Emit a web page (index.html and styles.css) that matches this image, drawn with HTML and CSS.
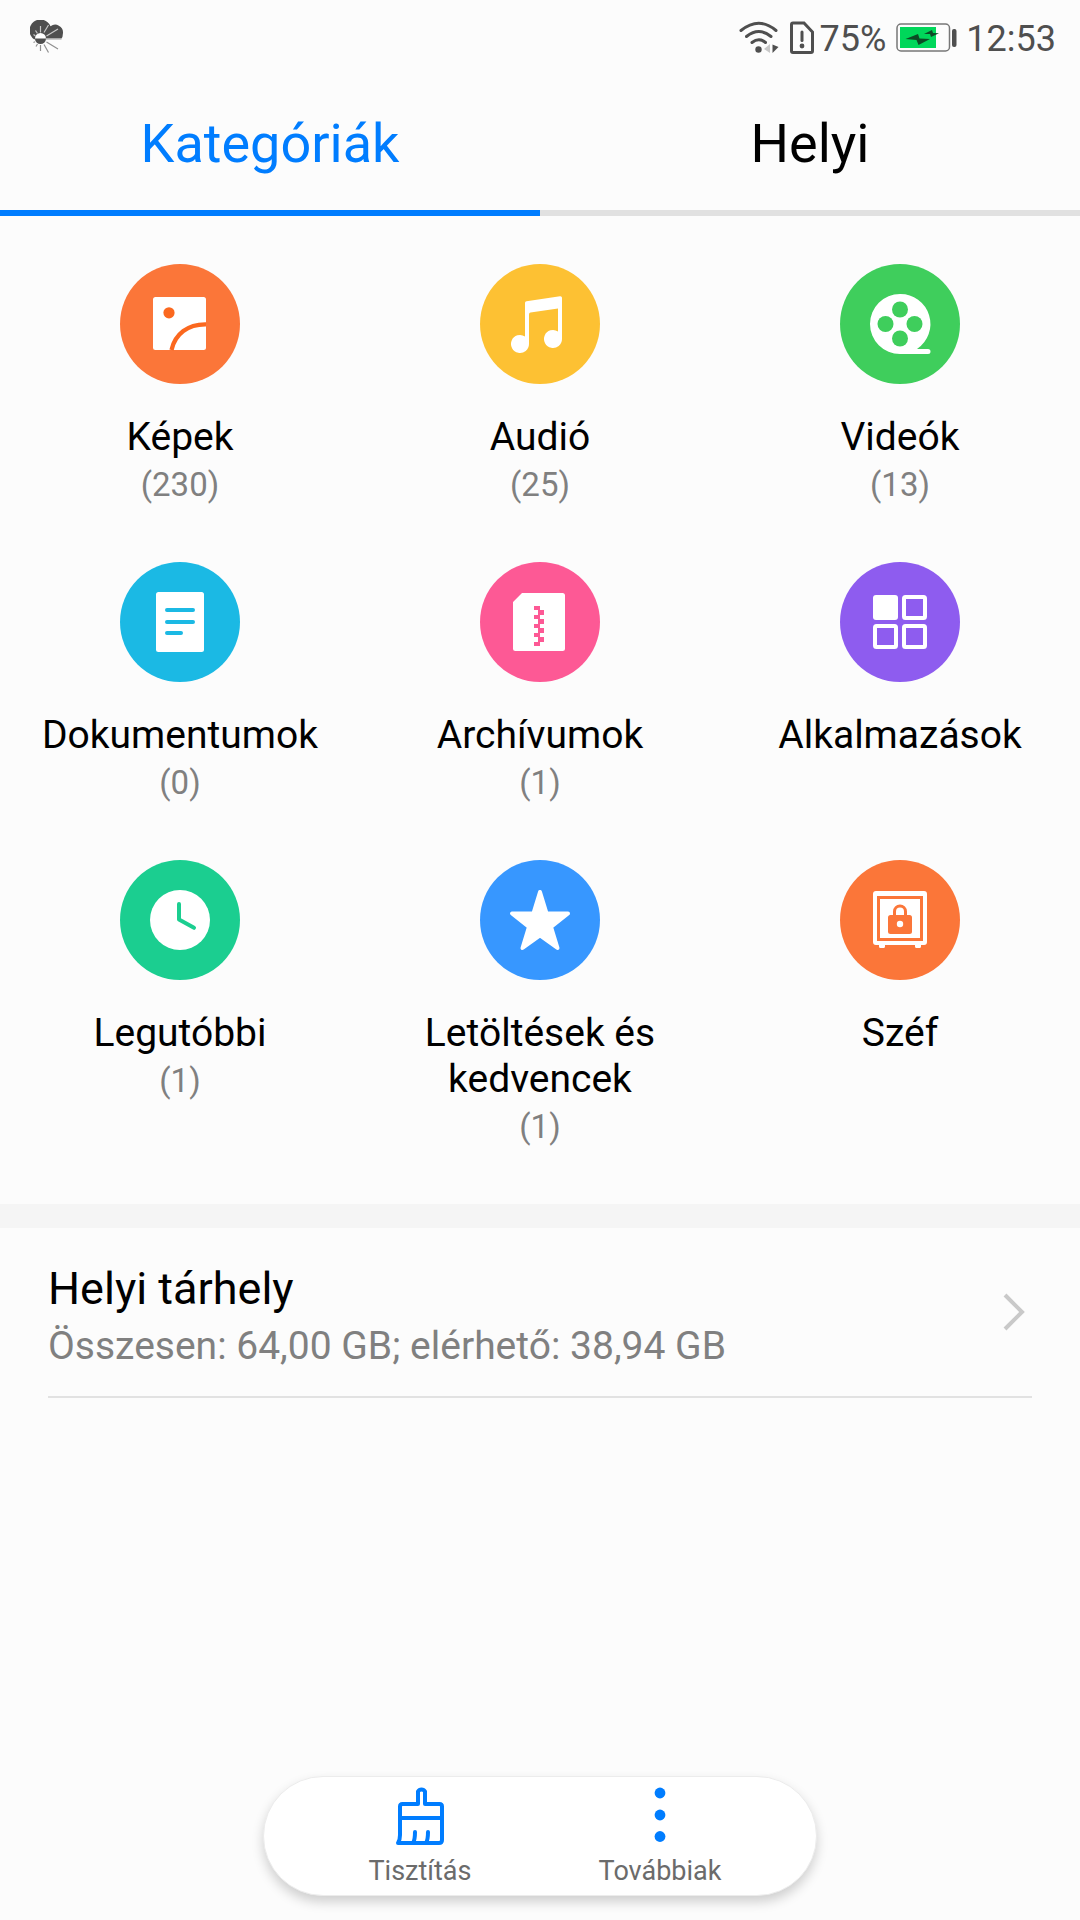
FILE: index.html
```html
<!DOCTYPE html>
<html lang="hu">
<head>
<meta charset="utf-8">
<meta name="viewport" content="width=device-width, initial-scale=1">
<title>Fájlok</title>
<link rel="stylesheet" href="styles.css">
</head>
<body>
<div class="screen">
  <header class="status">
    <svg class="status-weather" width="36" height="36" viewBox="0 0 36 36" aria-hidden="true">
      <path d="M4 19.200A10.900 10.900 0 1 1 20.500 6.300A7.800 7.800 0 0 1 33 13Q33 17 31 19.200Z" fill="#4f4f4f"/>
      <g stroke="#c8c8c8" stroke-width="1.200"><path d="M10.500 6v6.500M14 12.500l4.500-7.500M16.500 16 28 9M5.500 10.500 7.500 13.500M3.500 14.500l2 1.500M16 18.800h16"/></g>
      <g stroke="#909090" stroke-width="1.200"><path d="M10.500 25v6M14 24.500l4.500 8M16.500 22 28 29M7.500 24l-1.500 2.500M3.500 22.500l1.500-.7"/></g>
      <circle cx="10.500" cy="18.500" r="5.500" fill="#4f4f4f"/>
      <path d="M5 18.500a5.500 5.500 0 0 1 11 0z" fill="#fff"/>
    </svg>
    <div class="status-right">
      <svg width="40" height="34" viewBox="0 0 40 34" aria-hidden="true">
        <g fill="none" stroke="#4f4f4f" stroke-width="3" stroke-linecap="round"><path d="M2 9.500Q20 -5 37 9.500M7.500 15.500Q20 5.500 32 15.500M13 21.500Q20 16 26.500 21.500"/></g>
        <circle cx="19.500" cy="28.500" r="3.200" fill="#4f4f4f"/>
        <path d="M25 28l6-5v9z" fill="#c8c8c8"/><path d="M33.500 23.500v8.500l6-6z" fill="#4f4f4f"/>
      </svg>
      <svg class="status-sim" width="26" height="34" viewBox="0 0 26 34" aria-hidden="true">
        <path d="M4 2h11l8.500 9v19a1.500 1.500 0 0 1-1.500 1.500H4A1.500 1.500 0 0 1 2.500 30V3.500A1.500 1.500 0 0 1 4 2z" fill="none" stroke="#4f4f4f" stroke-width="3"/>
        <path d="M13 11v8.500" stroke="#4f4f4f" stroke-width="3" stroke-linecap="round"/><circle cx="13" cy="25" r="2.400" fill="#4f4f4f"/>
      </svg>
      <span class="status-percent">75%</span>
      <svg class="status-battery" width="62" height="30" viewBox="0 0 62 30" aria-hidden="true">
        <rect x="1" y="1" width="52.500" height="27" rx="4" fill="none" stroke="#777" stroke-width="1.500"/>
        <rect x="4" y="4" width="36" height="21" fill="#00d75a"/>
        <rect x="56" y="6" width="4.500" height="18" rx="2" fill="#4f4f4f"/>
        <path d="M9.500 16 22 11l1.500 4.500 10.500.5L22.500 22l-2-5z" fill="#0c4a25"/><path d="M28 11l8-4 1 3 6 .3L35 14l-1-3z" fill="#0c4a25"/>
      </svg>
      <time class="status-time">12:53</time>
    </div>
  </header>

  <nav class="tabs" role="tablist">
    <button class="tab tab-active" role="tab" aria-selected="true">Kategóriák</button>
    <button class="tab" role="tab" aria-selected="false">Helyi</button>
  </nav>

  <main>
    <div class="categories">
      <button class="category">
        <svg class="category-icon" viewBox="0 0 120 120" aria-hidden="true">
          <circle cx="60" cy="60" r="60" fill="#fb7639"/>
          <rect x="33" y="33" width="53" height="53" rx="2.500" fill="#fff"/>
          <circle cx="49" cy="48.800" r="5.600" fill="#fb681f"/>
          <path d="M51.500 86C55 70 68 60 86 60.300" fill="none" stroke="#fb681f" stroke-width="4.300"/>
        </svg>
        <span class="category-name">Képek</span><span class="category-count">(230)</span>
      </button>
      <button class="category">
        <svg class="category-icon" viewBox="0 0 120 120" aria-hidden="true">
          <circle cx="60" cy="60" r="60" fill="#fdc133"/>
          <path d="M49 80a9 9 0 1 1-4-7.500V39q0-1.500 1.500-1.800l33.500-5q2-.2 2 1.600V75a9 9 0 1 1-4-7.500V44.600L50.500 48.600q-1.500.3-1.500 1.800z" fill="#fff"/>
        </svg>
        <span class="category-name">Audió</span><span class="category-count">(25)</span>
      </button>
      <button class="category">
        <svg class="category-icon" viewBox="0 0 120 120" aria-hidden="true">
          <circle cx="60" cy="60" r="60" fill="#3fce5c"/>
          <path d="M60 30a30 30 0 0 1 17 55h11a2.500 2.500 0 0 1 0 5H60a30 30 0 0 1 0-60z" fill="#fff"/>
          <g fill="#3fce5c"><circle cx="60" cy="45.500" r="8"/><circle cx="45.500" cy="60" r="8"/><circle cx="74.500" cy="60" r="8"/><circle cx="60" cy="74.500" r="8"/></g>
        </svg>
        <span class="category-name">Videók</span><span class="category-count">(13)</span>
      </button>
      <button class="category">
        <svg class="category-icon" viewBox="0 0 120 120" aria-hidden="true">
          <circle cx="60" cy="60" r="60" fill="#1bb9e4"/>
          <rect x="36" y="30" width="48" height="60" rx="2.500" fill="#fff"/>
          <path d="M47 48h26M47 60h26M47 71h14" stroke="#1bb9e4" stroke-width="4" stroke-linecap="round"/>
        </svg>
        <span class="category-name">Dokumentumok</span><span class="category-count">(0)</span>
      </button>
      <button class="category">
        <svg class="category-icon" viewBox="0 0 120 120" aria-hidden="true">
          <circle cx="60" cy="60" r="60" fill="#fd5995"/>
          <path d="M42 31h40.500a2.500 2.500 0 0 1 2.500 2.500v53a2.500 2.500 0 0 1-2.500 2.500h-47a2.500 2.500 0 0 1-2.500-2.500V40z" fill="#fff"/>
          <path d="M54 44h6v4h4v5h-4v4h4v5h-4v4h4v5h-4v4h4v5h-4v4h-6v-4h4v-5h-4v-4h4v-5h-4v-4h4v-5h-4v-4h4v-5h-4z" fill="#fd5995"/>
        </svg>
        <span class="category-name">Archívumok</span><span class="category-count">(1)</span>
      </button>
      <button class="category">
        <svg class="category-icon" viewBox="0 0 120 120" aria-hidden="true">
          <circle cx="60" cy="60" r="60" fill="#8e5cef"/>
          <rect x="33" y="33" width="25" height="25" rx="3" fill="#fff"/>
          <g fill="none" stroke="#fff" stroke-width="4"><rect x="64" y="35" width="21" height="21" rx="1.500"/><rect x="35" y="64" width="21" height="21" rx="1.500"/><rect x="64" y="64" width="21" height="21" rx="1.500"/></g>
        </svg>
        <span class="category-name">Alkalmazások</span>
      </button>
      <button class="category">
        <svg class="category-icon" viewBox="0 0 120 120" aria-hidden="true">
          <circle cx="60" cy="60" r="60" fill="#1bce90"/><circle cx="60" cy="60" r="30" fill="#fff"/>
          <path d="M59 44v15.500L74 67.800" fill="none" stroke="#1bce90" stroke-width="4" stroke-linecap="round" stroke-linejoin="round"/>
        </svg>
        <span class="category-name">Legutóbbi</span><span class="category-count">(1)</span>
      </button>
      <button class="category">
        <svg class="category-icon" viewBox="0 0 120 120" aria-hidden="true">
          <circle cx="60" cy="60" r="60" fill="#3797ff"/>
          <path d="M60 32 66.600 53.500H88L71 66.800 77.500 88 60 75.400 42.500 88 49 66.800 32 53.500H53.400z" fill="#fff" stroke="#fff" stroke-width="4" stroke-linejoin="round"/>
        </svg>
        <span class="category-name">Letöltések és kedvencek</span><span class="category-count">(1)</span>
      </button>
      <button class="category">
        <svg class="category-icon" viewBox="0 0 120 120" aria-hidden="true">
          <circle cx="60" cy="60" r="60" fill="#fb7639"/>
          <path d="M36 31h48a3 3 0 0 1 3 3v48a3 3 0 0 1-3 3h-3v1.500a1.500 1.500 0 0 1-1.500 1.500h-3a1.500 1.500 0 0 1-1.500-1.500V85H45v1.500a1.500 1.500 0 0 1-1.500 1.500h-3a1.500 1.500 0 0 1-1.500-1.500V85h-3a3 3 0 0 1-3-3V34a3 3 0 0 1 3-3z" fill="#fff"/>
          <rect x="38.500" y="37.500" width="43" height="42" fill="none" stroke="#fb7639" stroke-width="3"/>
          <path d="M54.500 56v-4.500a5.500 5.500 0 0 1 11 0V56" fill="none" stroke="#fb7639" stroke-width="3"/>
          <rect x="48" y="55" width="24" height="19" rx="2.500" fill="#fb7639"/><circle cx="60" cy="64" r="3.200" fill="#fff"/>
        </svg>
        <span class="category-name">Széf</span>
      </button>
    </div>

    <section class="storage">
      <a class="storage-row" href="#">
        <span class="storage-text"><span class="storage-title">Helyi tárhely</span><span class="storage-detail">Összesen: 64,00 GB; elérhető: 38,94 GB</span></span>
        <svg class="storage-arrow" width="24" height="40" viewBox="0 0 24 40" aria-hidden="true"><path d="M3 2l17 17L3 36" fill="none" stroke="#c9c9c9" stroke-width="4"/></svg>
      </a>
    </section>
  </main>

  <footer class="toolbar">
    <button class="tool">
      <svg width="60" height="60" viewBox="0 0 60 60" aria-hidden="true">
        <g fill="none" stroke="#007dff" stroke-width="4" stroke-linecap="round" stroke-linejoin="round">
          <path d="M28 19V6.500a4 4 0 0 1 7 0V19h14.500q2.500 0 2.500 2.500V55q0 3-3 3H8q2-3 2-8V21.500Q10 19 12.500 19H28M10 33h42"/><path d="M25 47q0 8-2 11M38 47q0 8-2 11"/>
        </g>
      </svg>
      <span>Tisztítás</span>
    </button>
    <button class="tool">
      <svg width="60" height="60" viewBox="0 0 60 60" aria-hidden="true"><g fill="#007dff"><circle cx="30" cy="8" r="5.400"/><circle cx="30" cy="30" r="5.400"/><circle cx="30" cy="51.500" r="5.400"/></g></svg>
      <span>Továbbiak</span>
    </button>
  </footer>
</div>
</body>
</html>
```
FILE: styles.css
```css
* { box-sizing: border-box; }
body { margin: 0; background: #fcfcfc; color: #000; font-family: Roboto, "Liberation Sans", sans-serif; }
button { margin: 0; padding: 0; border: 0; background: none; color: inherit; font: inherit; cursor: pointer; }
svg { display: block; flex: none; }

.screen { display: flex; flex-direction: column; min-height: 100vh; }

.status { display: flex; justify-content: space-between; align-items: center; height: 76px; padding: 0 24px 0 30px; color: #4f4f4f; font-size: 36px; line-height: 42px; }
.status-right { display: flex; align-items: center; }
.status-sim { margin-left: 10px; }
.status-percent { margin-left: 5px; padding-top: 2px; }
.status-battery { margin: 0 8px 0 10px; }
.status-time { padding-top: 2px; }

.tabs { display: flex; }
.tab { flex: 1; height: 140px; padding-top: 1px; border-bottom: 6px solid #e1e1e1; font-size: 54px; line-height: 64px; }
.tab-active { border-color: #007dff; color: #007dff; }

.categories { display: grid; grid-template-columns: repeat(3, 1fr); row-gap: 58px; padding: 48px 0 58px; }
.category { display: flex; flex-direction: column; align-items: center; justify-content: flex-start; padding: 0 24px; }
.category-icon { width: 120px; height: 120px; margin-bottom: 30px; }
.category-name { font-size: 39px; line-height: 46px; }
.category-count { margin-top: 5px; color: #808080; font-size: 33px; line-height: 39px; }

.storage { padding: 0 48px; border-top: 24px solid #f5f5f5; }
.storage-row { display: flex; align-items: center; justify-content: space-between; padding: 35px 6px 27px 0; border-bottom: 2px solid #e2e2e2; color: inherit; text-decoration: none; }
.storage-text { display: flex; flex-direction: column; gap: 8px; }
.storage-title { font-size: 45px; line-height: 52px; }
.storage-detail { color: #808080; font-size: 39px; line-height: 46px; }
.storage-arrow { margin-bottom: 6px; }

.toolbar { display: flex; align-self: center; margin: auto 0 24px; padding: 0 36px; border: 1px solid #ececec; border-radius: 60px; background: #fff; box-shadow: 0 6px 12px rgba(0, 0, 0, .18); }
.tool { display: flex; flex-direction: column; align-items: center; gap: 10px; width: 240px; padding: 8px 0; color: #6b6b6b; font-size: 27px; line-height: 32px; }
```
